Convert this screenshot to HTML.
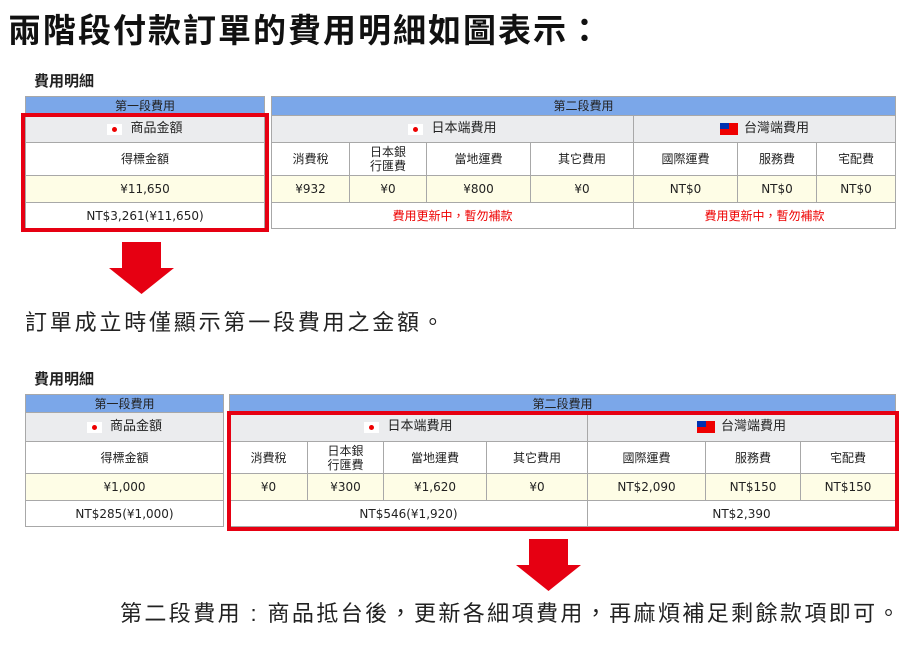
<!DOCTYPE html>
<html><head><meta charset="utf-8"><style>
body{margin:0;width:912px;height:662px;background:#fff;position:relative;overflow:hidden;font-family:"Liberation Sans","Noto Sans CJK TC",sans-serif;}
.a{position:absolute;}
.c{position:absolute;box-sizing:border-box;border:1px solid #a8a8a8;display:flex;align-items:center;justify-content:center;text-align:center;font-size:12px;color:#222;line-height:14px;font-family:"DejaVu Sans","Noto Sans CJK TC",sans-serif;}
.bl{background:#7ba7e9;}
.gr{background:#ebecee;font-size:13px;}
.wh{background:#fff;}
.ye{background:#fefde6;}
.red{color:#e00;}
.jp{display:inline-block;width:15px;height:11px;background:#fff;position:relative;margin-right:8px;}
.jp:after{content:"";position:absolute;left:5px;top:3px;width:5px;height:5px;border-radius:50%;background:#e00;}
.tw{display:inline-block;width:18px;height:12px;background:#e00;position:relative;margin-right:6px;}
.tw:after{content:"";position:absolute;left:0;top:0;width:9px;height:6px;background:#0030b0;}
.box{position:absolute;border:4px solid #e60012;box-sizing:border-box;}
</style></head><body>
<div class="a" style="left:8px;top:4px;font-size:33px;font-weight:bold;color:#111;letter-spacing:2px;white-space:nowrap;">兩階段付款訂單的費用明細如圖表示：</div>

<div class="a" style="left:34px;top:70px;font-size:15px;font-weight:bold;color:#222;">費用明細</div>
<!-- table 1 -->
<div class="c bl" style="left:25px;top:96px;width:240px;height:20px;">第一段費用</div>
<div class="c gr" style="left:25px;top:115px;width:240px;height:28px;"><span class="jp"></span>商品金額</div>
<div class="c wh" style="left:25px;top:142px;width:240px;height:34px;">得標金額</div>
<div class="c ye" style="left:25px;top:175px;width:240px;height:28px;">¥11,650</div>
<div class="c wh" style="left:25px;top:202px;width:240px;height:27px;">NT$3,261(¥11,650)</div>

<div class="c bl" style="left:271px;top:96px;width:625px;height:20px;">第二段費用</div>
<div class="c gr" style="left:271px;top:115px;width:363px;height:28px;"><span class="jp"></span>日本端費用</div>
<div class="c gr" style="left:633px;top:115px;width:263px;height:28px;"><span class="tw"></span>台灣端費用</div>
<div class="c wh" style="left:271px;top:142px;width:79px;height:34px;">消費稅</div>
<div class="c wh" style="left:349px;top:142px;width:78px;height:34px;">日本銀<br>行匯費</div>
<div class="c wh" style="left:426px;top:142px;width:105px;height:34px;">當地運費</div>
<div class="c wh" style="left:530px;top:142px;width:104px;height:34px;">其它費用</div>
<div class="c wh" style="left:633px;top:142px;width:105px;height:34px;">國際運費</div>
<div class="c wh" style="left:737px;top:142px;width:80px;height:34px;">服務費</div>
<div class="c wh" style="left:816px;top:142px;width:80px;height:34px;">宅配費</div>
<div class="c ye" style="left:271px;top:175px;width:79px;height:28px;">¥932</div>
<div class="c ye" style="left:349px;top:175px;width:78px;height:28px;">¥0</div>
<div class="c ye" style="left:426px;top:175px;width:105px;height:28px;">¥800</div>
<div class="c ye" style="left:530px;top:175px;width:104px;height:28px;">¥0</div>
<div class="c ye" style="left:633px;top:175px;width:105px;height:28px;">NT$0</div>
<div class="c ye" style="left:737px;top:175px;width:80px;height:28px;">NT$0</div>
<div class="c ye" style="left:816px;top:175px;width:80px;height:28px;">NT$0</div>
<div class="c wh red" style="left:271px;top:202px;width:363px;height:27px;">費用更新中，暫勿補款</div>
<div class="c wh red" style="left:633px;top:202px;width:263px;height:27px;">費用更新中，暫勿補款</div>
<div class="box" style="left:21px;top:113px;width:248px;height:119px;"></div>

<svg class="a" style="left:108px;top:242px;" width="70" height="54"><polygon points="14,0 53,0 53,26 66,26 33.5,52 1,26 14,26" fill="#e60012"/></svg>
<div class="a" style="left:25px;top:305px;font-size:22px;color:#222;letter-spacing:2.8px;white-space:nowrap;">訂單成立時僅顯示第一段費用之金額。</div>

<div class="a" style="left:34px;top:368px;font-size:15px;font-weight:bold;color:#222;">費用明細</div>
<!-- table 2 -->
<div class="c bl" style="left:25px;top:394px;width:199px;height:19px;">第一段費用</div>
<div class="c gr" style="left:25px;top:412px;width:199px;height:30px;"><span class="jp"></span>商品金額</div>
<div class="c wh" style="left:25px;top:441px;width:199px;height:33px;">得標金額</div>
<div class="c ye" style="left:25px;top:473px;width:199px;height:28px;">¥1,000</div>
<div class="c wh" style="left:25px;top:500px;width:199px;height:27px;">NT$285(¥1,000)</div>

<div class="c bl" style="left:229px;top:394px;width:667px;height:19px;">第二段費用</div>
<div class="c gr" style="left:229px;top:412px;width:359px;height:30px;"><span class="jp"></span>日本端費用</div>
<div class="c gr" style="left:587px;top:412px;width:309px;height:30px;"><span class="tw"></span>台灣端費用</div>
<div class="c wh" style="left:229px;top:441px;width:79px;height:33px;">消費稅</div>
<div class="c wh" style="left:307px;top:441px;width:77px;height:33px;">日本銀<br>行匯費</div>
<div class="c wh" style="left:383px;top:441px;width:104px;height:33px;">當地運費</div>
<div class="c wh" style="left:486px;top:441px;width:102px;height:33px;">其它費用</div>
<div class="c wh" style="left:587px;top:441px;width:119px;height:33px;">國際運費</div>
<div class="c wh" style="left:705px;top:441px;width:96px;height:33px;">服務費</div>
<div class="c wh" style="left:800px;top:441px;width:96px;height:33px;">宅配費</div>
<div class="c ye" style="left:229px;top:473px;width:79px;height:28px;">¥0</div>
<div class="c ye" style="left:307px;top:473px;width:77px;height:28px;">¥300</div>
<div class="c ye" style="left:383px;top:473px;width:104px;height:28px;">¥1,620</div>
<div class="c ye" style="left:486px;top:473px;width:102px;height:28px;">¥0</div>
<div class="c ye" style="left:587px;top:473px;width:119px;height:28px;">NT$2,090</div>
<div class="c ye" style="left:705px;top:473px;width:96px;height:28px;">NT$150</div>
<div class="c ye" style="left:800px;top:473px;width:96px;height:28px;">NT$150</div>
<div class="c wh" style="left:229px;top:500px;width:359px;height:27px;">NT$546(¥1,920)</div>
<div class="c wh" style="left:587px;top:500px;width:309px;height:27px;">NT$2,390</div>
<div class="box" style="left:227px;top:411px;width:672px;height:120px;"></div>

<svg class="a" style="left:515px;top:539px;" width="70" height="54"><polygon points="14,0 53,0 53,26 66,26 33.5,52 1,26 14,26" fill="#e60012"/></svg>
<div class="a" style="left:120px;top:596px;font-size:22px;color:#222;white-space:nowrap;letter-spacing:2.4px;">第二段費用 : 商品抵台後，更新各細項費用，再麻煩補足剩餘款項即可。</div>
</body></html>
